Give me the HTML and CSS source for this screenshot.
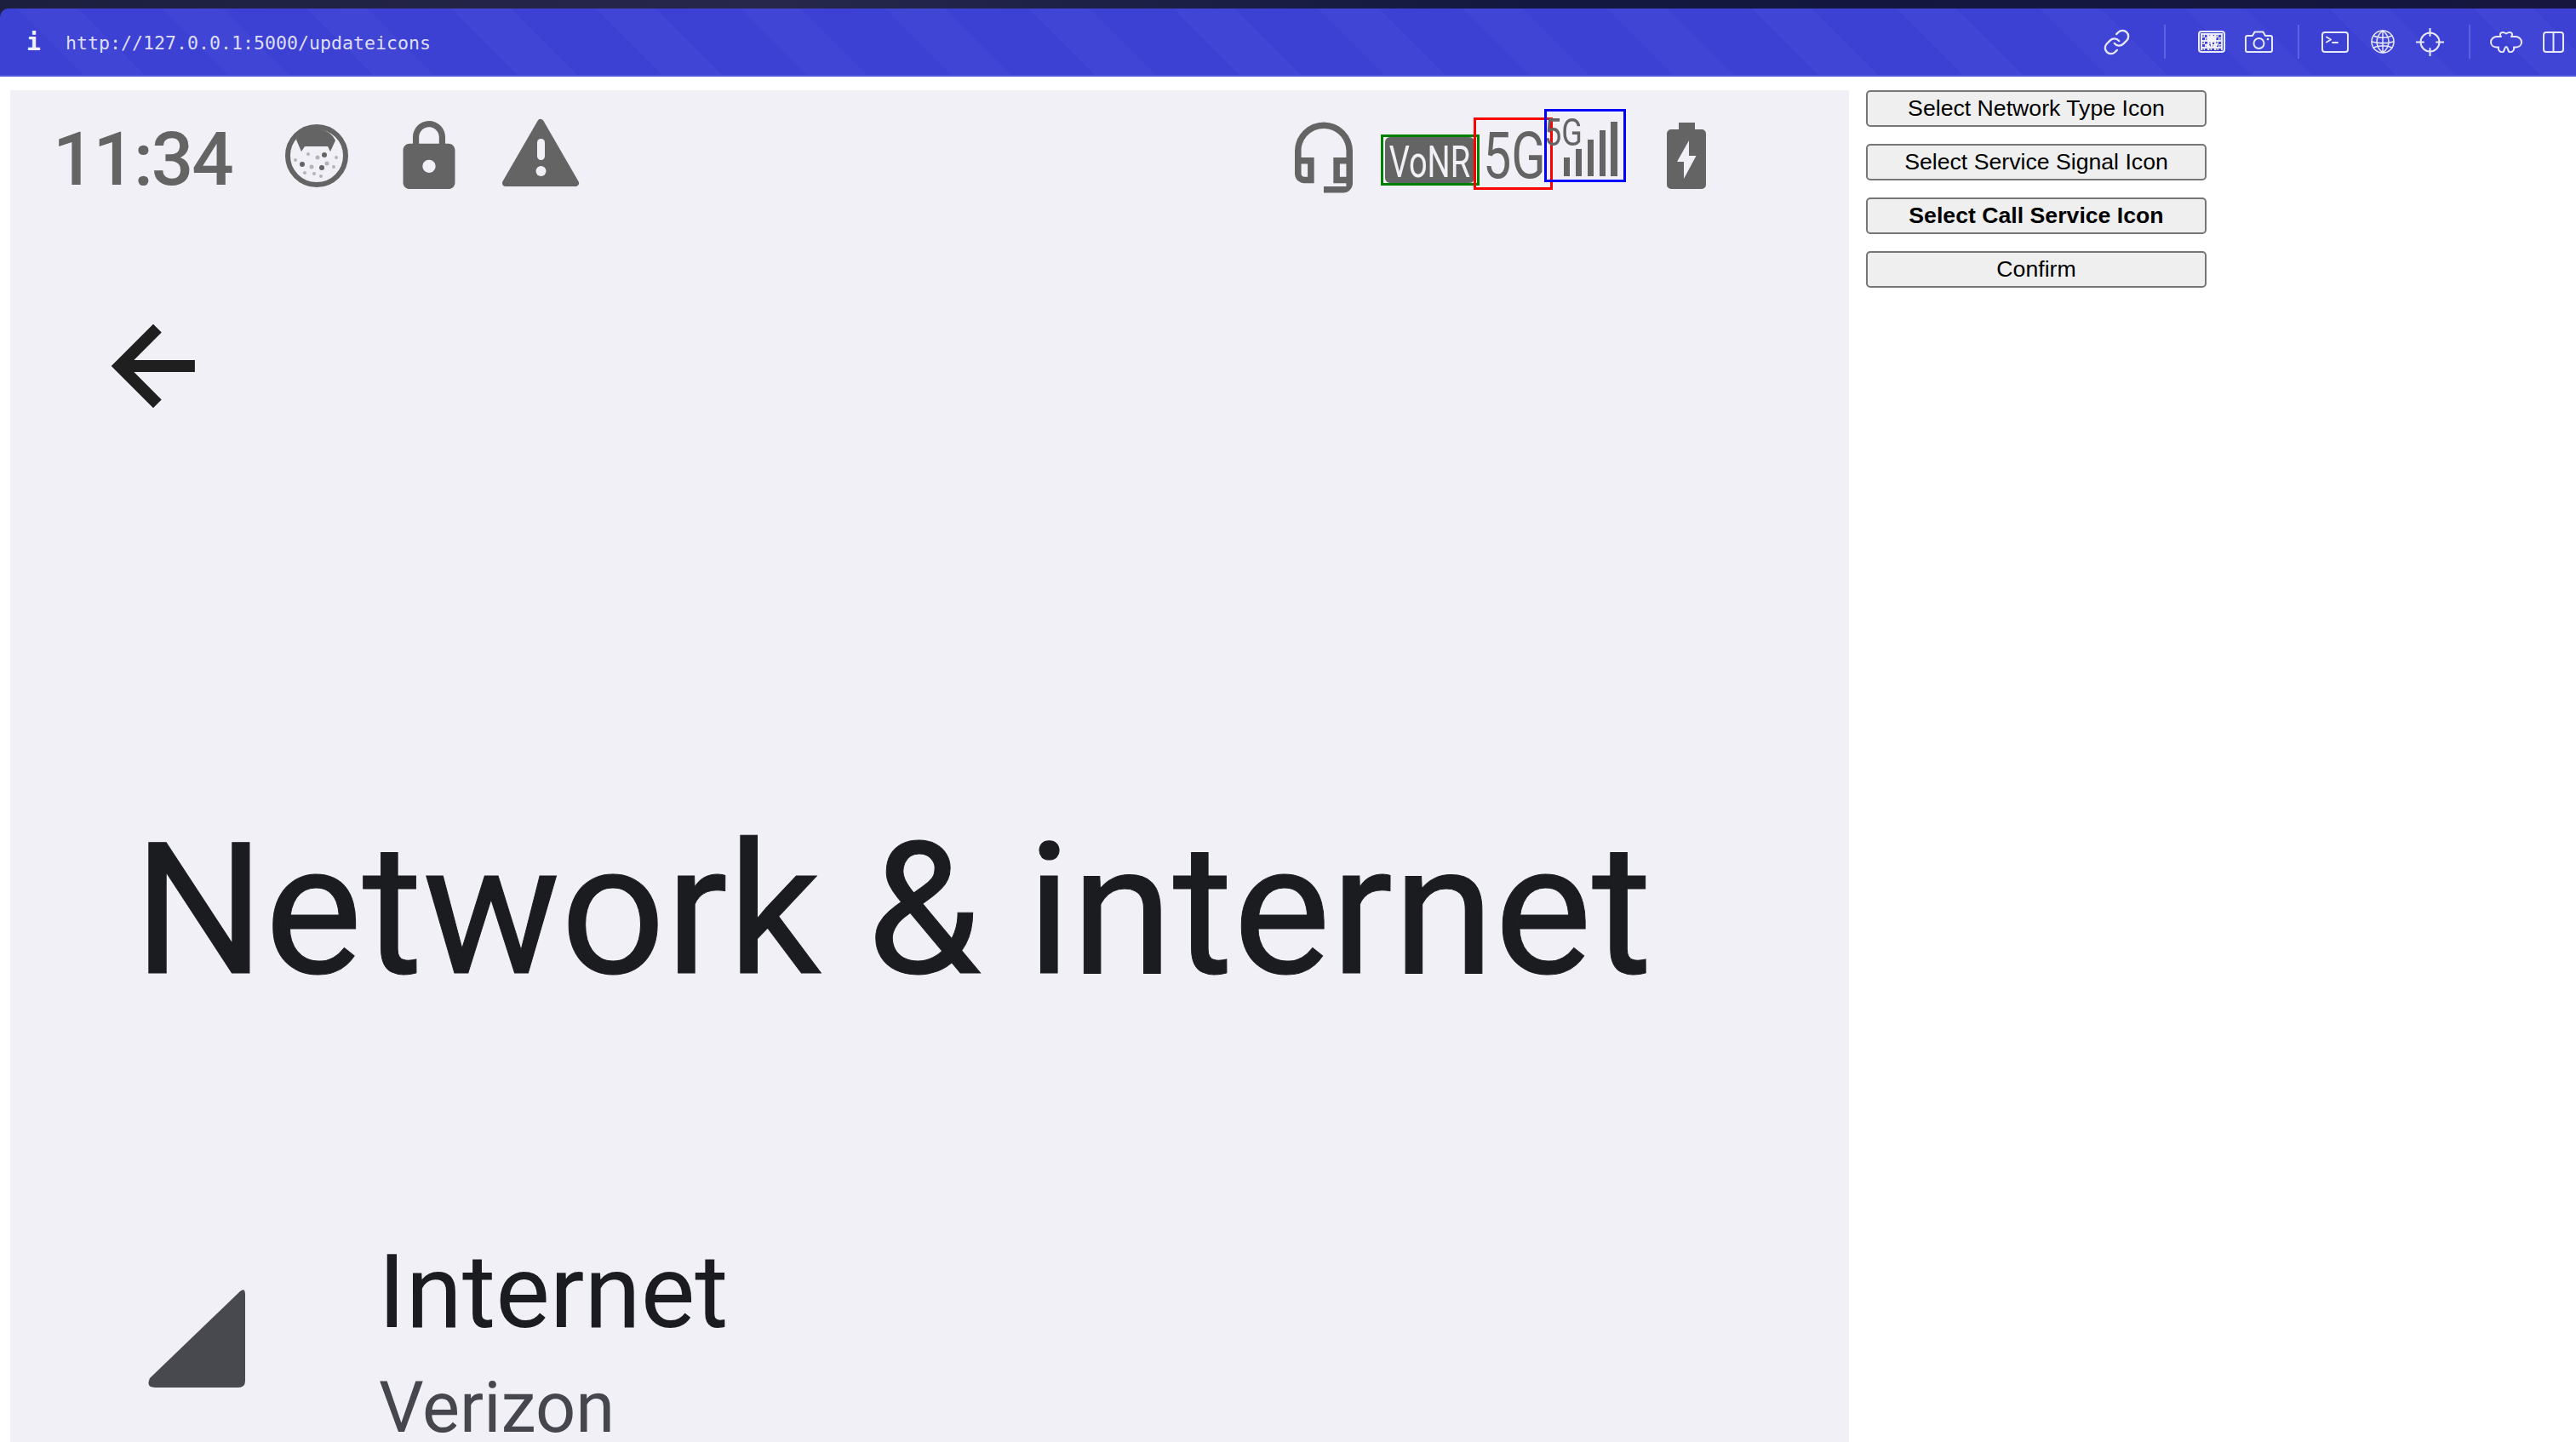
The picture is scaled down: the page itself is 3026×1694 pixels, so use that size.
FILE: index.html
```html
<!DOCTYPE html>
<html>
<head>
  <title>Update Icons</title>
  <link rel="stylesheet" href="styles.css">
</head>
<body>
  <div class="top-strip">
    <div class="toolbar">
      <span class="info">i</span>
      <span class="url">http://127.0.0.1:5000/updateicons</span>

      <div class="tools">
        <svg class="tool tool-link" viewBox="0 0 24 24"><path d="M10 13a5 5 0 0 0 7.54.54l3-3a5 5 0 0 0-7.07-7.07l-1.72 1.71"/><path d="M14 11a5 5 0 0 0-7.54-.54l-3 3a5 5 0 0 0 7.07 7.07l1.71-1.71"/></svg>
        <span class="sep sep-first"></span>
        <svg class="tool tool-shot" viewBox="0 0 32 26">
          <defs>
            <pattern id="checks" width="8" height="8" patternUnits="userSpaceOnUse">
              <rect width="4" height="4" fill="#7b7fe4"/>
              <rect x="4" y="4" width="4" height="4" fill="#7b7fe4"/>
            </pattern>
          </defs>
          <rect x="1" y="1" width="30" height="24" rx="3"/>
          <rect class="checks" x="3" y="3" width="26" height="20"/>
          <path class="solid" d="M10.5 4.5l2.6 2 2.9-2.5 2.9 2.5 2.6-2v5.5c0 2.4-2 4-4.6 4h-1.8c-2.6 0-4.6-1.600-4.600-4zM15 13h2v6h-2zM8.500 15.500c3.500-.5 6 1 6.500 4.500-3.500.5-6-1-6.500-4.500zM23.500 15.500c-3.500-.5-6 1-6.500 4.500 3.500.5 6-1 6.500-4.500z"/>
        </svg>
        <svg class="tool tool-camera" viewBox="0 0 33 26">
          <path d="M3 6h6l2.500-4.500h10L24 6h6a2 2 0 0 1 2 2v15a2 2 0 0 1-2 2H3a2 2 0 0 1-2-2V8a2 2 0 0 1 2-2z"/>
          <circle cx="16.500" cy="15" r="6"/>
          <circle class="solid" cx="27" cy="10" r="1.300"/>
        </svg>
        <span class="sep sep-second"></span>
        <svg class="tool tool-term" viewBox="0 0 32 25">
          <rect x="1" y="1" width="30" height="23" rx="3"/>
          <path d="M6 6.500l5 3-5 3M13 13h6"/>
        </svg>
        <svg class="tool tool-globe" viewBox="0 0 28 28">
          <circle cx="14" cy="14" r="13"/>
          <path d="M14 1c-5 4-7 8-7 13s2 9 7 13M14 1c5 4 7 8 7 13s-2 9-7 13M14 1v26M3 7c6 3 16 3 22 0M1 14c8 2 18 2 26 0M3 21c6-3 16-3 22 0"/>
        </svg>
        <svg class="tool tool-cross" viewBox="0 0 33 33">
          <circle cx="16.500" cy="16.500" r="11"/>
          <path d="M16.500 0v9M16.500 24v9M0 16.500h9M24 16.500h9"/>
        </svg>
        <span class="sep sep-third"></span>
        <svg class="tool tool-puzzle" viewBox="0 0 38 26">
          <path d="M13 7C10 3 14 .5 19 3.500C24 .5 28 3 25 7H30C34 7 37 10 37 13.500C37 17 34 19.500 30 19.500H28C29 24 25 26 22.500 25C21 24 21 19 19 19C17 19 17 24 15.500 25C13 26 9 24 10 19.500H8C4 19.500 1 17 1 13.500C1 10 4 7 8 7Z"/>
        </svg>
        <svg class="tool tool-split" viewBox="0 0 25 25">
          <rect x="1" y="1" width="23" height="23" rx="3"/>
          <path d="M12.500 1v23"/>
        </svg>
      </div>
    </div>
  </div>

  <div class="main">
    <div class="phone">
      <div class="status-bar">
        <span class="time">11:34</span>

        <!-- cat face notification -->
        <svg class="status-icon cat" viewBox="0 0 77 77">
          <circle class="cat-ring" cx="38" cy="38" r="34"/>
          <path d="M14 19L20 33L24 27H51L54 33L60 20C52 2 22 2 14 19Z"/>
          <circle cx="47" cy="37" r="3"/>
          <circle cx="21" cy="48" r="3"/>
          <circle cx="44" cy="52" r="3"/>
          <g class="cat-dots">
            <circle cx="32" cy="51" r="2.500"/>
            <circle cx="39" cy="40" r="2.500"/>
            <circle cx="61" cy="40" r="2"/>
            <circle cx="58" cy="51" r="2"/>
            <circle cx="50" cy="47" r="2.500"/>
            <circle cx="24" cy="58" r="2"/>
            <circle cx="35" cy="59" r="2"/>
            <circle cx="43" cy="62" r="2"/>
            <circle cx="13" cy="43" r="2"/>
            <circle cx="28" cy="36" r="2"/>
          </g>
        </svg>

        <svg class="status-icon lock" viewBox="4 1 16 21"><path d="M18 8h-1V6c0-2.760-2.240-5-5-5S7 3.240 7 6v2H6c-1.100 0-2 .9-2 2v10c0 1.100.9 2 2 2h12c1.100 0 2-.9 2-2V10c0-1.100-.9-2-2-2zm-6 9c-1.100 0-2-.9-2-2s.9-2 2-2 2 .9 2 2-.9 2-2 2zM15.100 8H8.900V6c0-1.710 1.390-3.100 3.100-3.100 1.710 0 3.100 1.390 3.100 3.100v2z"/></svg>

        <svg class="status-icon warn" viewBox="0 0 92 81">
          <path class="warn-shape" d="M46 5L87 76H5Z"/>
          <rect class="warn-mark" x="42" y="24" width="9" height="25" rx="4.500"/>
          <circle class="warn-mark" cx="46.500" cy="62" r="6"/>
        </svg>

        <svg class="status-icon headset" viewBox="3 1 18 22"><path d="M19 14v4h-2v-4h2M7 14v4H6c-.55 0-1-.45-1-1v-3h2m5-13a9 9 0 0 0-9 9v7c0 1.660 1.340 3 3 3h3v-8H5v-2c0-3.870 3.130-7 7-7s7 3.130 7 7v2h-4v8h4v1h-7v2h6c1.660 0 3-1.340 3-3V10a9 9 0 0 0-9-9z"/></svg>

        <div class="net-icons">
          <div class="net-box box-call">
            <div class="vonr"><span>VoNR</span></div>
          </div>
          <div class="net-box box-type">
            <span class="type-label">5G</span>
          </div>
          <div class="net-box box-signal">
            <span class="signal-label">5G</span>
            <svg class="bars" viewBox="0 0 63 64">
              <rect x="0" y="42" width="7" height="22"/>
              <rect x="14" y="32" width="7" height="32"/>
              <rect x="28" y="21" width="7" height="43"/>
              <rect x="42" y="10" width="7" height="54"/>
              <rect x="55" y="0" width="8" height="64"/>
            </svg>
          </div>
        </div>

        <svg class="status-icon battery" viewBox="0 0 46 78">
          <path d="M14 0H33V8H41A5 5 0 0 1 46 13V73A5 5 0 0 1 41 78H5A5 5 0 0 1 0 73V13A5 5 0 0 1 5 8H14Z"/>
          <path class="bolt" d="M26 21L12 46H20V66L34.500 39H26Z"/>
        </svg>
      </div>

      <svg class="back-arrow" viewBox="0 0 24 24"><path d="M20 11H7.830l5.590-5.590L12 4l-8 8 8 8 1.410-1.410L7.830 13H20v-2z"/></svg>

      <h1 class="page-title">Network &amp; internet</h1>

      <div class="list-row">
        <svg class="row-icon" viewBox="0 0 114 115"><path d="M108 2Q114 -3 114 6V107Q114 115 106 115H8Q-3 115 2 104Z"/></svg>
        <div class="row-text">
          <div class="row-title">Internet</div>
          <div class="row-sub">Verizon</div>
        </div>
      </div>
    </div>

    <div class="side-buttons">
      <button type="button">Select Network Type Icon</button>
      <button type="button">Select Service Signal Icon</button>
      <button type="button" class="current">Select Call Service Icon</button>
      <button type="button">Confirm</button>
    </div>
  </div>
</body>
</html>
```

FILE: styles.css
```css
* {
  box-sizing: border-box;
}

html,
body {
  height: 100%;
}

body {
  margin: 0;
  overflow: hidden;
  display: flex;
  flex-direction: column;
  background-color: #ffffff;
  font-family: "Liberation Sans", Arial, sans-serif;
}

/* Browser toolbar */
.top-strip {
  padding-top: 10px;
  flex: none;
  background: linear-gradient(90deg, #1d1f3f, #26274b 30%, #12183f 60%, #16163f);
}

.toolbar {
  height: 80px;
  display: flex;
  align-items: center;
  padding: 0 14px 0 31px;
  border-top-left-radius: 10px;
  border-bottom: 2px solid #5056d8;
  background: repeating-linear-gradient(45deg, #3c41d4 0 70px, #4045d5 70px 120px);
}

.info {
  width: 16px;
  margin-right: 30px;
  font-family: "DejaVu Sans Mono", monospace;
  font-size: 28px;
  font-weight: bold;
  color: #f0f0ff;
}

.url {
  padding-top: 3px;
  font-family: "DejaVu Sans Mono", monospace;
  font-size: 21.6px;
  color: #dedef8;
}

.tools {
  margin-left: auto;
  display: flex;
  align-items: center;
}

.tool {
  display: block;
  fill: none;
  stroke: #e8e8fb;
  stroke-width: 2;
  stroke-linecap: round;
  stroke-linejoin: round;
}

.tool .solid {
  fill: #f2f2fe;
  stroke: none;
}

.tool .checks {
  fill: url(#checks);
  stroke: none;
}

.tool-link {
  width: 33px;
  height: 33px;
  stroke-width: 1.700;
}

.tool-shot {
  width: 32px;
  height: 26px;
  margin-right: 23px;
}

.tool-camera {
  width: 33px;
  height: 26px;
}

.tool-term {
  width: 32px;
  height: 25px;
  margin-right: 26px;
}

.tool-globe {
  width: 28px;
  height: 28px;
  margin-right: 25px;
  stroke-width: 1.500;
}

.tool-cross {
  width: 33px;
  height: 33px;
}

.tool-puzzle {
  width: 38px;
  height: 26px;
  margin-right: 24px;
}

.tool-split {
  width: 25px;
  height: 25px;
}

.sep {
  width: 2px;
  height: 40px;
  background-color: #5c62e2;
}

.sep-first {
  margin: 0 38px 0 39px;
}

.sep-second {
  margin: 0 26px 0 29px;
}

.sep-third {
  margin: 0 23px 0 29px;
}

/* Main area */
.main {
  flex: 1;
  min-height: 0;
  display: flex;
  padding: 16px 0 0 12px;
}

.phone {
  width: 2160px;
  overflow: hidden;
  background-color: #f0f0f6;
}

.status-bar {
  height: 150px;
  display: flex;
  align-items: flex-start;
  padding: 0 168px 0 50px;
}

.time {
  flex: none;
  width: 209px;
  margin-top: 38px;
  margin-right: 63px;
  font-family: Roboto, sans-serif;
  font-size: 87px;
  font-weight: 500;
  line-height: 1;
  letter-spacing: -2px;
  white-space: nowrap;
  color: #646464;
}

.status-icon {
  display: block;
  flex: none;
  fill: #646464;
}

.cat {
  width: 77px;
  height: 77px;
  margin-top: 39px;
  margin-right: 62px;
  filter: blur(0.7px);
}

.cat-ring {
  fill: none;
  stroke: #646464;
  stroke-width: 6;
}

.cat-dots {
  fill: #b4b4b8;
}

.lock {
  width: 62px;
  height: 80px;
  margin-top: 36px;
  margin-right: 54px;
}

.warn {
  width: 92px;
  height: 81px;
  margin-top: 33px;
}

.warn-shape {
  stroke: #646464;
  stroke-width: 8;
  stroke-linejoin: round;
}

.warn-mark {
  fill: #f0f0f6;
}

.headset {
  width: 68px;
  height: 84px;
  margin-top: 37px;
  margin-left: auto;
  margin-right: 33px;
}

.net-icons {
  position: relative;
  flex: none;
  width: 288px;
  height: 95px;
  margin-top: 22px;
  margin-right: 48px;
}

/* Detection boxes overlap each other */
.net-box {
  position: absolute;
  border-width: 3px;
  border-style: solid;
}

.box-call {
  left: 0;
  top: 30px;
  width: 116px;
  height: 60px;
  padding: 0 3px 0 2px;
  border-color: #008000;
}

.box-type {
  left: 109px;
  top: 10px;
  width: 93px;
  height: 85px;
  border-color: #ff0000;
}

.box-signal {
  left: 192px;
  top: 0;
  width: 96px;
  height: 86px;
  border-color: #0000ff;
}

.vonr {
  height: 100%;
  display: flex;
  justify-content: center;
  align-items: center;
  border-radius: 6px;
  background-color: #646464;
}

.vonr span {
  flex: none;
  margin-top: 5px;
  font-family: Roboto, sans-serif;
  font-size: 52px;
  line-height: 1;
  color: #f0f0f6;
  transform: scaleX(0.73);
}

.type-label {
  position: absolute;
  left: 8px;
  top: 4px;
  font-family: Roboto, sans-serif;
  font-size: 76px;
  line-height: 1;
  color: #646464;
  transform: scaleX(0.78);
  transform-origin: left center;
}

.signal-label {
  position: absolute;
  left: -3px;
  top: 3px;
  font-family: Roboto, sans-serif;
  font-size: 44px;
  line-height: 1;
  color: #646464;
  transform: scaleX(0.82);
  transform-origin: left center;
}

.bars {
  position: absolute;
  left: 20px;
  top: 12px;
  width: 63px;
  height: 64px;
  fill: #646464;
}

.battery {
  width: 46px;
  height: 78px;
  margin-top: 38px;
}

.bolt {
  fill: #f0f0f6;
}

.back-arrow {
  display: block;
  width: 144px;
  height: 144px;
  margin: 102px 0 0 96px;
  fill: #1f1f1f;
  stroke: #1f1f1f;
  stroke-width: 0.3;
}

.page-title {
  margin: 460px 0 0 145px;
  font-family: Roboto, sans-serif;
  font-size: 216px;
  font-weight: 400;
  line-height: 1;
  white-space: nowrap;
  color: #1b1c20;
  -webkit-text-stroke: 1px #1b1c20;
}

.list-row {
  display: flex;
  align-items: flex-start;
  margin-top: 280px;
  padding-left: 162px;
}

.row-icon {
  flex: none;
  width: 114px;
  height: 115px;
  margin-top: 57px;
  margin-right: 156px;
  fill: #48484f;
}

.row-title {
  font-family: Roboto, sans-serif;
  font-size: 120px;
  line-height: 1;
  color: #1b1c20;
}

.row-sub {
  margin-top: 39px;
  margin-left: 1px;
  font-family: Roboto, sans-serif;
  font-size: 83px;
  line-height: 0.9;
  color: #46464f;
}

/* Icon picker buttons */
.side-buttons {
  display: flex;
  flex-direction: column;
  gap: 20px;
  width: 400px;
  margin-left: 20px;
}

.side-buttons button {
  height: 43px;
  padding: 0;
  border: 2px solid #767676;
  border-radius: 5px;
  background-color: #efefef;
  font-family: "Liberation Sans", Arial, sans-serif;
  font-size: 26.67px;
  color: #000000;
}

.side-buttons .current {
  font-weight: bold;
}
```
